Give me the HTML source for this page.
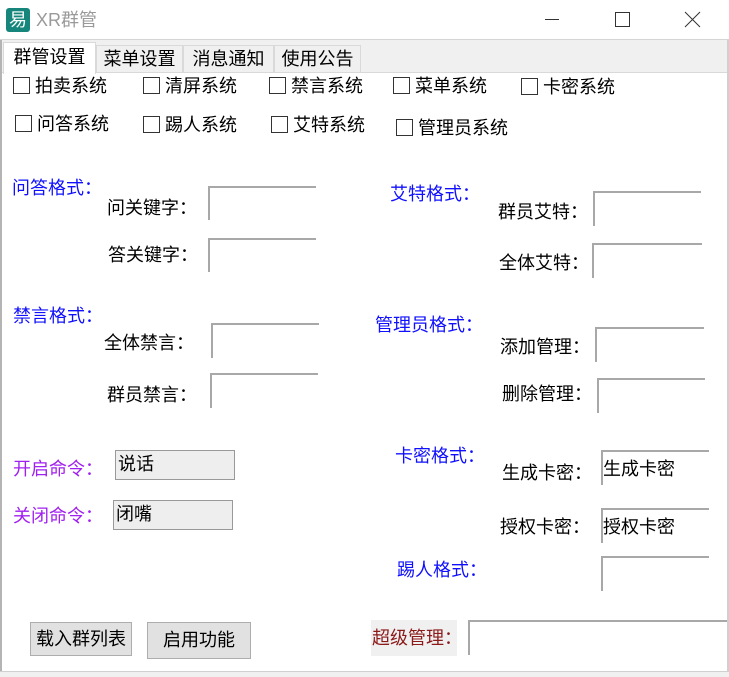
<!DOCTYPE html>
<html><head><meta charset="utf-8"><style>
*{margin:0;padding:0;box-sizing:border-box}
body{width:729px;height:677px;background:#fff;position:relative;overflow:hidden;font-family:"Liberation Sans","Noto Sans CJK SC",sans-serif;font-size:18px;color:#000}
.a{position:absolute;white-space:nowrap;line-height:22px}
.in{position:absolute;border-top:2px solid #a8a8a8;border-left:2px solid #a8a8a8;background:#fff;font-size:18px;line-height:26px;padding-left:0}
.cb{position:absolute;width:17px;height:17px;border:1.5px solid #333;background:#fff}
.blue{color:#1010ff}
.pur{color:#a020f0}
.tab{position:absolute;top:45px;height:27px;border:1px solid #d9d9d9;border-bottom:none;background:#f0f0f0;line-height:26px;text-align:center;font-size:18px}
.btn{position:absolute;background:#e1e1e1;border:1px solid #adadad;text-align:center;font-size:18px}
</style></head><body>
<div class="a" style="left:6px;top:8px;width:24px;height:24px;background:#16867c;border-radius:3px;color:#fff;font-size:18px;line-height:24px;text-align:center">易</div>
<div class="a" style="left:36px;top:8px;font-size:18px;line-height:24px;color:#9a9a9a">XR群管</div>
<div class="a" style="left:545px;top:19px;width:14px;height:1px;background:#333"></div>
<div class="a" style="left:615px;top:12px;width:15px;height:15px;border:1px solid #333"></div>
<svg class="a" style="left:684px;top:11px" width="17" height="17"><path d="M1 1L16 16M16 1L1 16" stroke="#333" stroke-width="1"/></svg>
<div class="a" style="left:0;top:39px;width:729px;height:1px;background:#d4d4d4"></div>
<div class="a" style="left:0;top:40px;width:2px;height:637px;background:#b4b4b4"></div>
<div class="a" style="left:727px;top:40px;width:2px;height:637px;background:#d0d0d0"></div>
<div class="a" style="left:0;top:671px;width:729px;height:6px;background:#f0f0f0;border-top:1px solid #d0d0d0"></div>
<div class="a" style="left:2px;top:40px;width:725px;height:33px;background:#f0f0f0"></div>
<div class="a" style="left:2px;top:72px;width:725px;height:1px;background:#d9d9d9"></div>
<div class="tab" style="left:96px;width:87px">菜单设置</div>
<div class="tab" style="left:183px;width:91px">消息通知</div>
<div class="tab" style="left:274px;width:87px">使用公告</div>
<div class="a" style="left:3px;top:42px;width:93px;height:32px;background:#fff;border:1px solid #d9d9d9;border-bottom:none;text-align:center;line-height:28px">群管设置</div>
<div class="cb" style="left:13px;top:77px"></div><div class="a" style="left:35px;top:75px">拍卖系统</div>
<div class="cb" style="left:143px;top:77px"></div><div class="a" style="left:165px;top:75px">清屏系统</div>
<div class="cb" style="left:269px;top:77px"></div><div class="a" style="left:291px;top:75px">禁言系统</div>
<div class="cb" style="left:393px;top:77px"></div><div class="a" style="left:415px;top:75px">菜单系统</div>
<div class="cb" style="left:521px;top:78px"></div><div class="a" style="left:543px;top:76px">卡密系统</div>
<div class="cb" style="left:15px;top:115px"></div><div class="a" style="left:37px;top:113px">问答系统</div>
<div class="cb" style="left:143px;top:116px"></div><div class="a" style="left:165px;top:114px">踢人系统</div>
<div class="cb" style="left:271px;top:116px"></div><div class="a" style="left:293px;top:114px">艾特系统</div>
<div class="cb" style="left:396px;top:119px"></div><div class="a" style="left:418px;top:117px">管理员系统</div>
<div class="a blue" style="left:12px;top:177px">问答格式：</div>
<div class="a" style="left:107px;top:197px">问关键字：</div>
<div class="in" style="left:208px;top:186px;width:108px;height:34px"></div>
<div class="a" style="left:108px;top:244px">答关键字：</div>
<div class="in" style="left:208px;top:238px;width:108px;height:34px"></div>
<div class="a blue" style="left:13px;top:305px">禁言格式：</div>
<div class="a" style="left:104px;top:332px">全体禁言：</div>
<div class="in" style="left:211px;top:323px;width:108px;height:35px"></div>
<div class="a" style="left:107px;top:384px">群员禁言：</div>
<div class="in" style="left:210px;top:373px;width:108px;height:35px"></div>
<div class="a pur" style="left:13px;top:458px">开启命令：</div>
<div class="in" style="left:115px;top:450px;width:120px;height:30px;background:#eeeeee;border:1.5px solid #999;line-height:27px;padding-left:2px">说话</div>
<div class="a pur" style="left:13px;top:505px">关闭命令：</div>
<div class="in" style="left:113px;top:500px;width:120px;height:30px;background:#eeeeee;border:1.5px solid #999;line-height:27px;padding-left:2px">闭嘴</div>
<div class="a blue" style="left:390px;top:183px">艾特格式：</div>
<div class="a" style="left:498px;top:201px">群员艾特：</div>
<div class="in" style="left:593px;top:191px;width:108px;height:35px"></div>
<div class="a" style="left:499px;top:252px">全体艾特：</div>
<div class="in" style="left:592px;top:243px;width:110px;height:35px"></div>
<div class="a blue" style="left:375px;top:314px">管理员格式：</div>
<div class="a" style="left:500px;top:336px">添加管理：</div>
<div class="in" style="left:595px;top:327px;width:109px;height:35px"></div>
<div class="a" style="left:502px;top:383px">删除管理：</div>
<div class="in" style="left:597px;top:378px;width:108px;height:35px"></div>
<div class="a blue" style="left:395px;top:445px">卡密格式：</div>
<div class="a" style="left:502px;top:462px">生成卡密：</div>
<div class="in" style="left:601px;top:450px;width:108px;height:35px;line-height:34px">生成卡密</div>
<div class="a" style="left:500px;top:516px">授权卡密：</div>
<div class="in" style="left:601px;top:508px;width:108px;height:35px;line-height:34px">授权卡密</div>
<div class="a blue" style="left:397px;top:559px">踢人格式：</div>
<div class="in" style="left:601px;top:556px;width:108px;height:35px"></div>
<div class="btn" style="left:30px;top:622px;width:102px;height:34px;line-height:32px">载入群列表</div>
<div class="btn" style="left:147px;top:622px;width:104px;height:37px;line-height:35px">启用功能</div>
<div class="a" style="left:371px;top:620px;width:86px;height:36px;background:#f0f0f0;color:#8b1a1a;line-height:36px;padding-left:1px">超级管理：</div>
<div class="in" style="left:468px;top:620px;width:259px;height:35px"></div>
</body></html>
